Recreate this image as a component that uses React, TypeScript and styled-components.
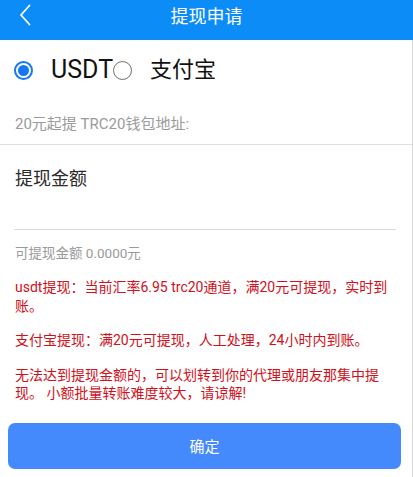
import styled, { createGlobalStyle } from "styled-components";

const GlobalStyle = createGlobalStyle`
  html, body {
    margin: 0;
    padding: 0;
    background: #fff;
  }
  body {
    font-family: Roboto, "Noto Sans CJK SC", sans-serif;
  }
`;

const Page = styled.div`
  width: 413px;
  height: 477px;
  display: flex;
  flex-direction: column;
  overflow: hidden;
`;

const Header = styled.header`
  position: relative;
  height: 40px;
  box-sizing: border-box;
  padding-bottom: 10px;
  display: flex;
  align-items: center;
  justify-content: center;
  background: #0b8cf6;
`;

const BackBtn = styled.div`
  position: absolute;
  left: 15px;
  top: 4px;
  width: 20px;
  height: 22px;
  display: flex;
  align-items: center;
  justify-content: center;
`;

const Title = styled.h1`
  margin: 0;
  font-size: 18px;
  font-weight: 400;
  color: #fff;
`;

const Body = styled.div`
  flex: 1;
  display: flex;
  flex-direction: column;
  border-right: 1px solid #d6d6d6;
`;

const RadioRow = styled.div`
  display: flex;
  align-items: center;
  height: 60px;
  padding: 0 14px;
`;

const Option = styled.label`
  display: flex;
  align-items: center;
  gap: 18px;
  font-size: 22px;
  color: #111;
`;

const OptionText = styled.span<{ latin?: boolean }>`
  font-size: ${(p) => (p.latin ? "25px" : "22px")};
  line-height: 30px;
`;

const Radio = styled.span<{ checked?: boolean }>`
  width: 19px;
  height: 19px;
  box-sizing: border-box;
  border-radius: 50%;
  border: ${(p) => (p.checked ? "2px solid #1677f2" : "1px solid #6e6e6e")};
  display: flex;
  align-items: center;
  justify-content: center;

  &::after {
    content: "";
    display: ${(p) => (p.checked ? "block" : "none")};
    width: 11px;
    height: 11px;
    border-radius: 50%;
    background: #1677f2;
  }
`;

const AddressRow = styled.div`
  height: 44px;
  padding: 0 15px;
  display: flex;
  align-items: center;
  font-size: 15px;
  color: #9a9a9a;
  border-bottom: 1px solid #dedede;
`;

const AmountBlock = styled.div`
  padding: 0 15px 0 14px;
`;

const AmountLabel = styled.div`
  padding-top: 22px;
  padding-left: 1px;
  font-size: 18px;
  color: #2a2a2a;
  line-height: 24px;
`;

const AmountInput = styled.div`
  height: 38px;
  margin-right: 1px;
  border-bottom: 1px solid #d9d9d9;
`;

const Balance = styled.div`
  margin-top: 14px;
  padding-left: 1px;
  font-size: 13.5px;
  color: #9a9a9a;
  line-height: 18px;
`;

const Notes = styled.div`
  padding: 16px 24px 0 15px;
  display: flex;
  flex-direction: column;
  gap: 16px;
`;

const Note = styled.p`
  margin: 0;
  font-size: 14px;
  line-height: 18.5px;
  color: #d0101a;
`;

const Footer = styled.div`
  padding: 20px 11px 0 8px;
`;

const SubmitBtn = styled.button`
  width: 100%;
  height: 46px;
  border: none;
  border-radius: 7px;
  background: #458afc;
  color: #fff;
  font-family: Roboto, "Noto Sans CJK SC", sans-serif;
  font-size: 15px;
`;

export default function App() {
  return (
    <>
      <GlobalStyle />
      <Page>
        <Header>
          <BackBtn>
            <svg width="14" height="22" viewBox="0 0 14 22" fill="none">
              <path
                d="M11.5 1.5L3 11l8.5 9.5"
                stroke="#fff"
                strokeWidth="1.8"
                strokeLinecap="round"
                strokeLinejoin="round"
              />
            </svg>
          </BackBtn>
          <Title>提现申请</Title>
        </Header>
        <Body>
          <RadioRow>
            <Option>
              <Radio checked />
              <OptionText latin>USDT</OptionText>
            </Option>
            <Option>
              <Radio />
              <OptionText>支付宝</OptionText>
            </Option>
          </RadioRow>
          <AddressRow>20元起提 TRC20钱包地址:</AddressRow>
          <AmountBlock>
            <AmountLabel>提现金额</AmountLabel>
            <AmountInput />
            <Balance>可提现金额 0.0000元</Balance>
          </AmountBlock>
          <Notes>
            <Note>usdt提现：当前汇率6.95 trc20通道，满20元可提现，实时到账。</Note>
            <Note>支付宝提现：满20元可提现，人工处理，24小时内到账。</Note>
            <Note>
              无法达到提现金额的，可以划转到你的代理或朋友那集中提现。 小额批量转账难度较大，请谅解!
            </Note>
          </Notes>
          <Footer>
            <SubmitBtn>确定</SubmitBtn>
          </Footer>
        </Body>
      </Page>
    </>
  );
}
